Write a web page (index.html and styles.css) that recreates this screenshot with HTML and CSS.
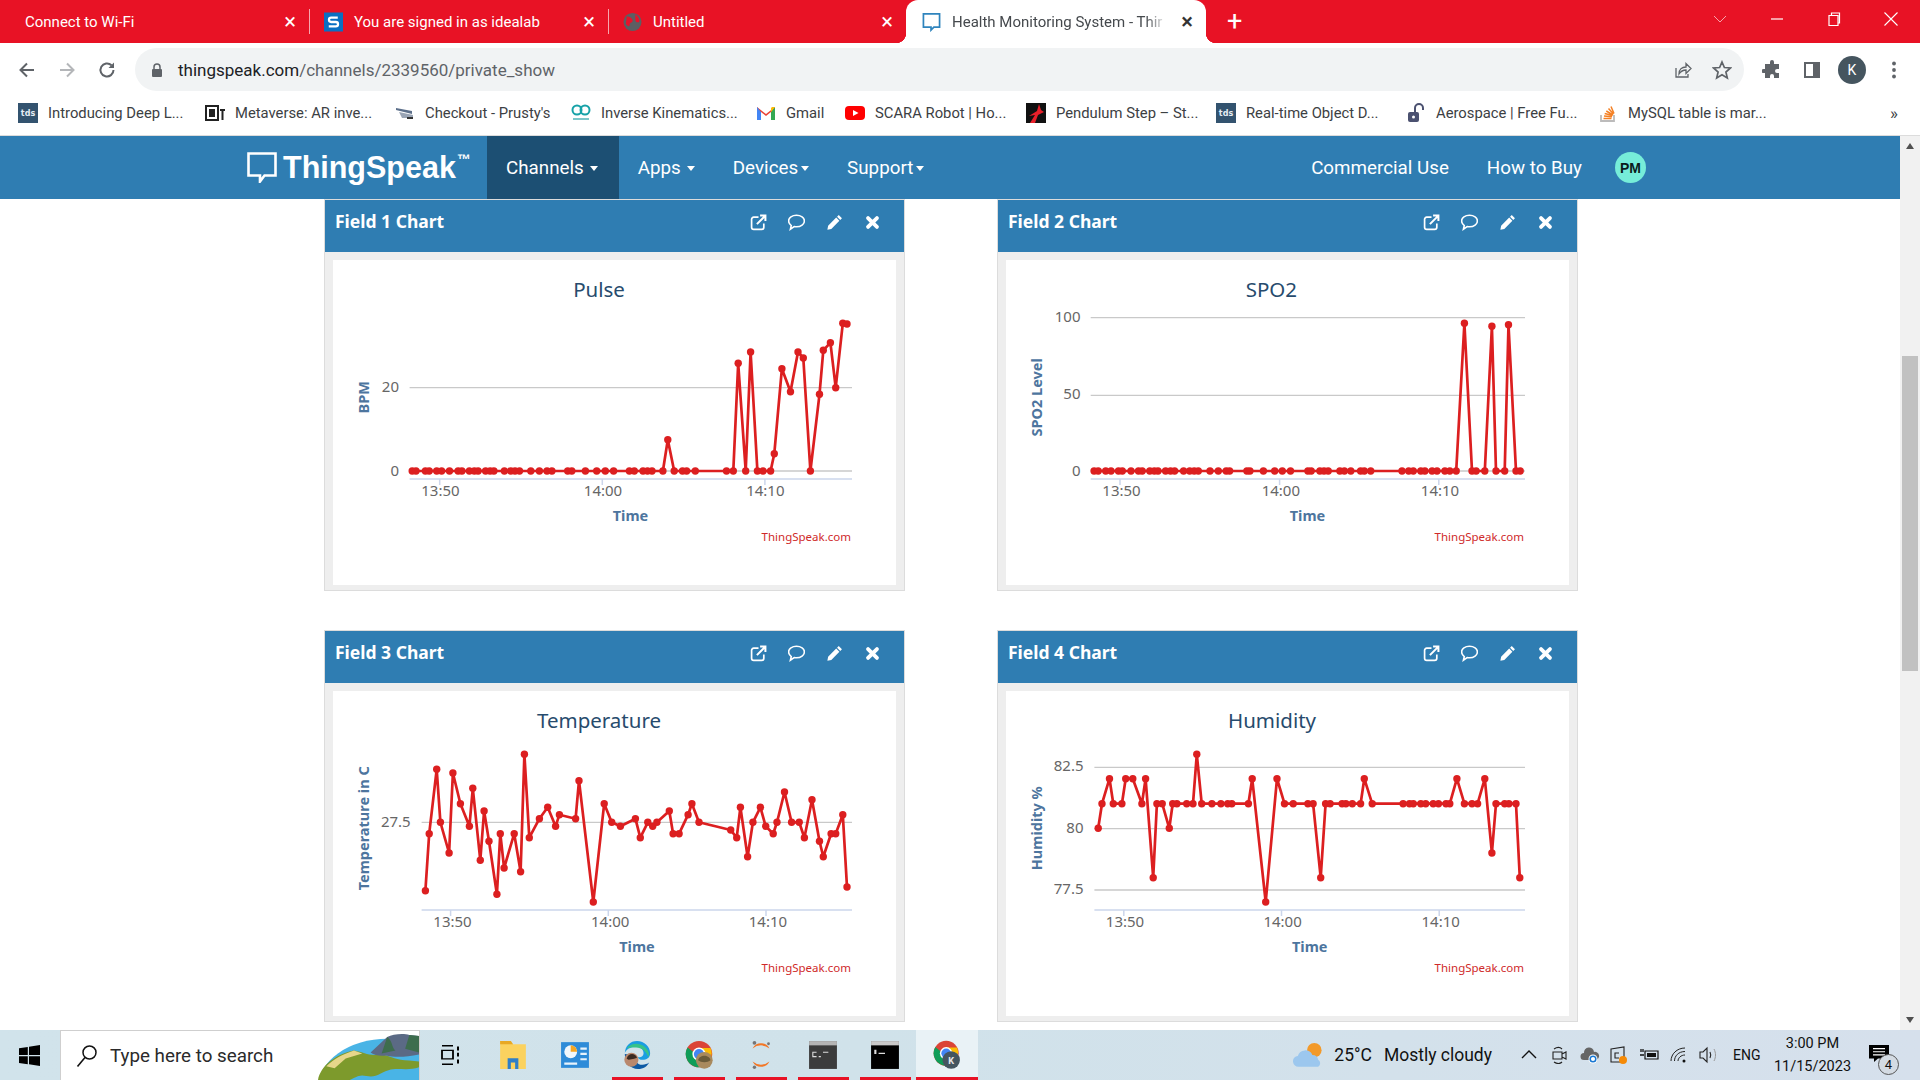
FILE: index.html
```html
<!DOCTYPE html>
<html lang="en">
<head>
<meta charset="utf-8">
<title>Health Monitoring System - ThingSpeak</title>
<link rel="stylesheet" href="styles.css">
</head>
<body>
<svg class="defs" aria-hidden="true">
  <defs>
    <symbol id="i-ext" viewBox="0 0 16 16"><path d="M13 9v3.500a2 2 0 0 1-2 2H3.500a2 2 0 0 1-2-2V5a2 2 0 0 1 2-2H8" fill="none" stroke="#fff" stroke-width="1.600"/><path d="M6.500 9.500 14 2M9.500 1.500h5v5" fill="none" stroke="#fff" stroke-width="1.900"/></symbol>
    <symbol id="i-com" viewBox="1 1.500 14 14"><path d="M8 2.500c3.600 0 6.500 2 6.500 4.700S11.600 12 8 12c-.7 0-1.300-.1-1.900-.2L3 14l.7-3C2.400 10 1.500 8.700 1.500 7.200 1.500 4.500 4.400 2.500 8 2.500z" fill="none" stroke="#fff" stroke-width="1.300"/></symbol>
    <symbol id="i-pen" viewBox="0 0 16 16"><path d="M12 1l3 3-1.600 1.600-3-3zM9.600 3.400l3 3L5 14l-3.700.8L2 11z" fill="#fff"/></symbol>
    <symbol id="i-x" viewBox="0 0 16 16"><path d="M3.800 3.800l8.400 8.400M12.200 3.800l-8.400 8.400" fill="none" stroke="#fff" stroke-width="3.600" stroke-linecap="round"/></symbol>
    <symbol id="i-chrome" viewBox="0 0 32 32"><circle cx="16" cy="16" r="15" fill="#db4437"/><path d="M16 16 3 23.500A15 15 0 0 1 3 8.500L10 14z" fill="#0f9d58"/><path d="M3 23.500 10 14l6 2 7 13A15 15 0 0 1 3 23.500z" fill="#0f9d58"/><path d="M16 9h13a15 15 0 0 1-8 20l-5-13z" fill="#fbbc05"/><circle cx="16" cy="16" r="7.500" fill="#fff"/><circle cx="16" cy="16" r="5.800" fill="#4285f4"/></symbol>
  </defs>
</svg>

<header class="tabs">
  <div class="tab"><span class="tab-title">Connect to Wi-Fi</span><span class="tab-x">×</span></div>
  <div class="tab sep">
    <svg class="fav" viewBox="0 0 20 20"><rect width="20" height="20" fill="#0a6fc2"/><path d="M14.500 5.500H7.500a2 2 0 0 0 0 4.500h5a2.200 2.200 0 0 1 0 4.500H5" fill="none" stroke="#fff" stroke-width="2.400"/></svg>
    <span class="tab-title">You are signed in as idealab</span><span class="tab-x">×</span>
  </div>
  <div class="tab sep">
    <svg class="fav" viewBox="0 0 20 20"><circle cx="10" cy="10" r="9.500" fill="#5c5f63"/><path d="M4 4c3 1 5 1 6 4s-3 2-3 5-2 1-4-1zM13 2c3 2 5 5 4 8-2 1-4 0-4-3z" fill="#e8122a"/></svg>
    <span class="tab-title">Untitled</span><span class="tab-x">×</span>
  </div>
  <div class="tab active">
    <svg class="fav" viewBox="0 0 20 20"><path d="M1.500 1.500h17v14h-6l-3 3v-3h-8z" fill="none" stroke="#2f84bd" stroke-width="1.800"/></svg>
    <span class="tab-title fade">Health Monitoring System - Thir</span><span class="tab-x dark">×</span>
  </div>
  <div class="tab-new">+</div>
  <div class="win">
    <svg class="win-ctl" viewBox="0 0 16 16"><path d="M2 5l6 6 6-6" fill="none" stroke="#f6a3ab" stroke-width="1"/></svg>
    <svg class="win-ctl" viewBox="0 0 16 16"><path d="M2 8h12" fill="none" stroke="#fff" stroke-width="1.200"/></svg>
    <svg class="win-ctl" viewBox="0 0 16 16"><path d="M3 4.500h9v10H3zM5.500 4.500V2h8v10H12" fill="none" stroke="#fff" stroke-width="1.200"/></svg>
    <svg class="win-ctl" viewBox="0 0 16 16"><path d="M1.500 1.500l13 13M14.500 1.500l-13 13" fill="none" stroke="#fff" stroke-width="1.100"/></svg>
  </div>
</header>

<div class="toolbar">
  <div class="nav-btns">
    <svg class="tb-icon" viewBox="0 0 20 20"><path d="M17 10H4M10 3.500 3.500 10l6.500 6.500" fill="none" stroke="#5f6368" stroke-width="2"/></svg>
    <svg class="tb-icon" viewBox="0 0 20 20"><path d="M3 10h13M10 3.500l6.500 6.500-6.500 6.500" fill="none" stroke="#b4b6b9" stroke-width="2"/></svg>
    <svg class="tb-icon" viewBox="0 0 20 20"><path d="M16.500 10a6.500 6.500 0 1 1-2-4.700" fill="none" stroke="#5f6368" stroke-width="2"/><path d="M17 2.500v5.500h-5.500z" fill="#5f6368"/></svg>
  </div>
  <div class="omnibox">
    <svg class="lock" viewBox="0 0 12 14"><path d="M3 6V4a3 3 0 0 1 6 0v2" fill="none" stroke="#5f6368" stroke-width="1.500"/><rect x="1" y="6" width="10" height="8" rx="1" fill="#5f6368"/></svg>
    <span class="url"><b>thingspeak.com</b>/channels/2339560/private_show</span>
    <svg class="omni-icon" viewBox="0 0 20 20"><path d="M4 8v9h12v-3" fill="none" stroke="#5f6368" stroke-width="1.300"/><path d="M7 14c0-5 3-7 7-7V3.500l5 5-5 5V10c-3 0-5 1-7 4z" fill="none" stroke="#5f6368" stroke-width="1.300"/></svg>
    <svg class="omni-icon" viewBox="0 0 20 20"><path d="M10 2l2.400 5.500 6 .5-4.500 4 1.400 5.900L10 14.800l-5.300 3.100L6.100 12 1.600 8l6-.5z" fill="none" stroke="#5f6368" stroke-width="1.700"/></svg>
  </div>
  <div class="tb-right">
    <svg class="tb-icon" viewBox="0 0 20 20"><path d="M8 2a2 2 0 0 1 4 0v2h5v5h-2a2 2 0 0 0 0 4h2v5h-5v-2a2 2 0 0 0-4 0v2H3v-5H1.500a2 2 0 0 1 0-4H3V4h5z" fill="#5f6368"/></svg>
    <svg class="tb-icon" viewBox="0 0 20 20"><path d="M3 3h14v14H3z" fill="none" stroke="#5f6368" stroke-width="2"/><path d="M11 3h6v14h-6z" fill="#5f6368"/></svg>
    <span class="avatar">K</span>
    <svg class="tb-icon" viewBox="0 0 20 20"><circle cx="10" cy="3.500" r="1.900" fill="#5f6368"/><circle cx="10" cy="10" r="1.900" fill="#5f6368"/><circle cx="10" cy="16.500" r="1.900" fill="#5f6368"/></svg>
  </div>
</div>

<nav class="bookmarks">
  <a class="bm"><span class="tds">tds</span><span>Introducing Deep L...</span></a>
  <a class="bm"><svg class="bm-ico" viewBox="0 0 20 20"><rect x="1" y="3" width="12" height="14" fill="none" stroke="#222" stroke-width="2"/><rect x="4" y="6" width="6" height="8" fill="#222"/><path d="M15 6h5v2h-1.500v9h-2V8H15z" fill="#222"/></svg><span>Metaverse: AR inve...</span></a>
  <a class="bm"><svg class="bm-ico" viewBox="0 0 20 20"><path d="M1 5l16 3v3L1 7z" fill="#5c6f8a"/><path d="M4 9l14 3v3H7z" fill="#9aa5b5"/><path d="M12 14h6v2h-6z" fill="#333"/></svg><span>Checkout - Prusty's</span></a>
  <a class="bm"><svg class="bm-ico" viewBox="0 0 20 20"><circle cx="6" cy="7" r="4.500" fill="none" stroke="#17a2a8" stroke-width="2"/><circle cx="14" cy="7" r="4.500" fill="none" stroke="#17a2a8" stroke-width="2"/><path d="M2 15h16v2H2z" fill="#7cc6c9"/></svg><span>Inverse Kinematics...</span></a>
  <a class="bm"><svg class="bm-ico" viewBox="0 0 20 20"><path d="M1 4l9 7 9-7v13h-4V9l-5 4-5-4v8H1z" fill="#ea4335"/><path d="M1 17h4V9L1 4z" fill="#4285f4"/><path d="M15 17h4V4l-4 5z" fill="#34a853"/><path d="M15 9l4-5h-3l-1 1z" fill="#fbbc05"/></svg><span>Gmail</span></a>
  <a class="bm"><svg class="bm-ico" viewBox="0 0 20 20"><rect y="3" width="20" height="14" rx="4" fill="#f00"/><path d="M8 7l5.500 3L8 13z" fill="#fff"/></svg><span>SCARA Robot | Ho...</span></a>
  <a class="bm"><svg class="bm-ico" viewBox="0 0 20 20"><rect width="20" height="20" fill="#111"/><path d="M4 20l5-8-6 1 8-5 2-7 2 6 3 2-6 3-3 8z" fill="#e8202a"/></svg><span>Pendulum Step – St...</span></a>
  <a class="bm"><span class="tds">tds</span><span>Real-time Object D...</span></a>
  <a class="bm"><svg class="bm-ico" viewBox="0 0 20 20"><path d="M9 9V5a4 4 0 0 1 8 0v2" fill="none" stroke="#4b5170" stroke-width="2"/><rect x="2" y="9" width="11" height="10" rx="2" fill="#4b5170"/><circle cx="7.500" cy="14" r="1.500" fill="#fff"/></svg><span>Aerospace | Free Fu...</span></a>
  <a class="bm"><svg class="bm-ico" viewBox="0 0 20 20"><path d="M3 12v6h13v-6" fill="none" stroke="#bcbbbb" stroke-width="1.800"/><path d="M5.500 15.500h8M6 13l8 .7M6.700 10.500l7.800 2M8.300 8l6.700 4M10.500 5.500l5 5.500M13 3.500l3 7" stroke="#f48024" stroke-width="1.500" fill="none"/></svg><span>MySQL table is mar...</span></a>
  <span class="bm-more">»</span>
</nav>

<div class="page">
  <main class="main">
    <div class="site-nav">
      <a class="logo">
        <svg class="logo-mark" viewBox="0 0 30 31"><path d="M1.500 1.500h27v22H17.500l-4.500 6v-6H1.500z" fill="none" stroke="#fff" stroke-width="2.600"/></svg>
        <span class="logo-text">ThingSpeak</span><span class="tm">™</span>
      </a>
      <a class="nav-item current">Channels <i class="caret"></i></a>
      <a class="nav-item">Apps <i class="caret"></i></a>
      <a class="nav-item tight">Devices<i class="caret"></i></a>
      <a class="nav-item tight">Support<i class="caret"></i></a>
      <a class="nav-link push">Commercial Use</a>
      <a class="nav-link">How to Buy</a>
      <span class="pm">PM</span>
    </div>

    <section class="grid">
      <article class="panel">
        <div class="panel-head"><h2>Field 1 Chart</h2><div class="panel-tools"><svg><use href="#i-ext"/></svg><svg><use href="#i-com"/></svg><svg><use href="#i-pen"/></svg><svg><use href="#i-x"/></svg></div></div>
        <div class="panel-body">
          <svg class="chart" viewBox="0 0 563 325">
            <defs><marker id="d1" markerUnits="userSpaceOnUse" markerWidth="9" markerHeight="9" refX="4.500" refY="4.500"><circle cx="4.500" cy="4.500" r="3.700" fill="#dc1f20"/></marker></defs>
            <text class="c-title" x="266" y="37" text-anchor="middle">Pulse</text>
            <path class="grid-line" d="M76.600 127.700H519M76.600 211H519"/>
            <path class="axis" d="M76.600 219H519M106.700 219v6M269.300 219v6M431.900 219v6"/>
            <polyline class="series" marker-start="url(#d1)" marker-mid="url(#d1)" marker-end="url(#d1)" points="79.200,211 83,211 92.400,211 96.200,211 103.700,211 108.600,211 116.500,211 125.100,211 128.900,211 136.400,211 141.300,211 145.100,211 152.600,211 157.100,211 160.900,211 171.400,211 177.800,211 182,211 186.500,211 197.800,211 206.400,211 214,211 218.900,211 234.700,211 238.800,211 252.400,211 263.700,211 272.300,211 280.600,211 296.400,211 301.300,211 310,211 314.500,211 319,211 329.900,211 334.800,179.700 341.200,211 349.500,211 353.600,211 362.300,211 393.500,211 400.300,211 405.200,103.300 412.700,211 417.600,92 424.400,211 430,211 437.600,211 441.300,193.700 448.900,108.700 457.500,131.700 465,92 470.300,98 477.400,211 486.500,134.300 490.300,90.300 497.400,82.700 502.700,127.700 509.800,63.300 514,64"/>
            <text class="c-y" x="66" y="132" text-anchor="end">20</text>
            <text class="c-y" x="66" y="216" text-anchor="end">0</text>
            <text class="c-x" x="107.400" y="236" text-anchor="middle">13:50</text>
            <text class="c-x" x="270" y="236" text-anchor="middle">14:00</text>
            <text class="c-x" x="432.300" y="236" text-anchor="middle">14:10</text>
            <text class="c-axis" x="297.500" y="261" text-anchor="middle">Time</text>
            <text class="c-axis" text-anchor="middle" transform="translate(35.500 137.300) rotate(-90)">BPM</text>
            <text class="c-credit" x="518" y="281" text-anchor="end">ThingSpeak.com</text>
          </svg>
        </div>
      </article>

      <article class="panel">
        <div class="panel-head"><h2>Field 2 Chart</h2><div class="panel-tools"><svg><use href="#i-ext"/></svg><svg><use href="#i-com"/></svg><svg><use href="#i-pen"/></svg><svg><use href="#i-x"/></svg></div></div>
        <div class="panel-body">
          <svg class="chart" viewBox="0 0 563 325">
            <defs><marker id="d2" markerUnits="userSpaceOnUse" markerWidth="9" markerHeight="9" refX="4.500" refY="4.500"><circle cx="4.500" cy="4.500" r="3.700" fill="#dc1f20"/></marker></defs>
            <text class="c-title" x="265.400" y="37" text-anchor="middle">SPO2</text>
            <path class="grid-line" d="M84.700 57.700H519M84.700 135.300H519M84.700 211H519"/>
            <path class="axis" d="M84.700 219H519M114 219v6M273.600 219v6M432.800 219v6"/>
            <polyline class="series" marker-start="url(#d2)" marker-mid="url(#d2)" marker-end="url(#d2)" points="88.100,211 92.200,211 99.700,211 105,211 112.500,211 116.300,211 125,211 132.500,211 136.200,211 143.800,211 148.300,211 152,211 159.600,211 164.500,211 168.600,211 177.600,211 183.700,211 188.200,211 192.300,211 204,211 212.300,211 220.200,211 223.600,211 240.900,211 243.900,211 257.400,211 268.700,211 276.300,211 284.500,211 301.900,211 305.200,211 313.900,211 318,211 322.200,211 333.900,211 338.400,211 344.800,211 354.600,211 358.300,211 364.700,211 396,211 402.700,211 407.300,211 414.800,211 418.900,211 426.100,211 431,211 438.900,211 443.800,211 450.200,211 458.400,63.300 466,211 470.100,211 478.800,211 485.900,66.300 490,211 498.700,211 502.500,64.700 510,211 514.200,211"/>
            <text class="c-y" x="74.500" y="62" text-anchor="end">100</text>
            <text class="c-y" x="74.500" y="139" text-anchor="end">50</text>
            <text class="c-y" x="74.500" y="216" text-anchor="end">0</text>
            <text class="c-x" x="115.500" y="236" text-anchor="middle">13:50</text>
            <text class="c-x" x="274.800" y="236" text-anchor="middle">14:00</text>
            <text class="c-x" x="434" y="236" text-anchor="middle">14:10</text>
            <text class="c-axis" x="301.500" y="261" text-anchor="middle">Time</text>
            <text class="c-axis" text-anchor="middle" transform="translate(35.500 137.300) rotate(-90)">SPO2 Level</text>
            <text class="c-credit" x="518" y="281" text-anchor="end">ThingSpeak.com</text>
          </svg>
        </div>
      </article>

      <article class="panel">
        <div class="panel-head"><h2>Field 3 Chart</h2><div class="panel-tools"><svg><use href="#i-ext"/></svg><svg><use href="#i-com"/></svg><svg><use href="#i-pen"/></svg><svg><use href="#i-x"/></svg></div></div>
        <div class="panel-body">
          <svg class="chart" viewBox="0 0 563 325">
            <defs><marker id="d3" markerUnits="userSpaceOnUse" markerWidth="9" markerHeight="9" refX="4.500" refY="4.500"><circle cx="4.500" cy="4.500" r="3.700" fill="#dc1f20"/></marker></defs>
            <text class="c-title" x="266" y="37" text-anchor="middle">Temperature</text>
            <path class="grid-line" d="M88.600 131.300H519"/>
            <path class="axis" d="M88.600 219H519M117.600 219v6M275.300 219v6M433 219v6"/>
            <polyline class="series" marker-start="url(#d3)" marker-mid="url(#d3)" marker-end="url(#d3)" points="92.400,199.700 96.200,142.700 103.700,78.300 107.400,131.300 116.100,162 119.900,82 127.400,112.700 136.400,135.300 139.800,97.300 147.300,169.300 151.100,120 156,150.300 163.900,203.300 167.300,142.700 171.100,177 181.200,142.700 187.600,180.700 191.400,63.300 196.300,146.700 206.400,127.700 214.700,116.300 222.600,135.300 226.400,123.700 242.600,127.700 246,89.700 260.300,211 271.200,112.700 278.700,131.300 287.400,135.300 302.400,127.700 307.300,146.700 314.800,131.300 319.700,135.300 323.900,131.300 336.300,120 340.100,142.700 346.100,142.700 355.100,123.700 358.900,112.700 366,131.300 397.700,139 403.700,146.700 407.400,116.300 414.600,165.700 419.900,131.300 427.400,116.300 432.700,135.300 440.200,142.700 444,131.300 451.500,101 458.600,131.300 466.200,131.300 471.400,146.700 479,108.700 486.500,150.300 490.300,165.700 498.100,142.700 502.700,142.700 509.800,123.700 514,196"/>
            <text class="c-y" x="77.700" y="136" text-anchor="end">27.5</text>
            <text class="c-x" x="119.500" y="236" text-anchor="middle">13:50</text>
            <text class="c-x" x="277.200" y="236" text-anchor="middle">14:00</text>
            <text class="c-x" x="434.900" y="236" text-anchor="middle">14:10</text>
            <text class="c-axis" x="304" y="261" text-anchor="middle">Time</text>
            <text class="c-axis" text-anchor="middle" transform="translate(35.500 137.300) rotate(-90)">Temperature in C</text>
            <text class="c-credit" x="518" y="281" text-anchor="end">ThingSpeak.com</text>
          </svg>
        </div>
      </article>

      <article class="panel">
        <div class="panel-head"><h2>Field 4 Chart</h2><div class="panel-tools"><svg><use href="#i-ext"/></svg><svg><use href="#i-com"/></svg><svg><use href="#i-pen"/></svg><svg><use href="#i-x"/></svg></div></div>
        <div class="panel-body">
          <svg class="chart" viewBox="0 0 563 325">
            <defs><marker id="d4" markerUnits="userSpaceOnUse" markerWidth="9" markerHeight="9" refX="4.500" refY="4.500"><circle cx="4.500" cy="4.500" r="3.700" fill="#dc1f20"/></marker></defs>
            <text class="c-title" x="266" y="37" text-anchor="middle">Humidity</text>
            <path class="grid-line" d="M88.400 76.300H519M88.400 137.700H519M88.400 199H519"/>
            <path class="axis" d="M88.400 219H519M117.800 219v6M275.500 219v6M433.200 219v6"/>
            <polyline class="series" marker-start="url(#d4)" marker-mid="url(#d4)" marker-end="url(#d4)" points="92.200,137.300 96,112.700 103.500,87.700 107.300,112.700 115.900,112.700 119.700,87.700 126.800,87.700 135.900,112.700 139.600,87.700 147.200,186.700 150.900,112.700 156.200,112.700 163.300,137.300 166.700,112.700 170.900,112.700 180.700,112.700 187,112.700 190.800,63.300 195.700,112.700 205.900,112.700 214.900,112.700 221.700,112.700 225.800,112.700 242.400,112.700 246.200,87.700 259.700,211 271,87.700 278.500,112.700 287.200,112.700 301.900,112.700 307.100,112.700 314.700,186.700 319.600,112.700 324.100,112.700 336.100,112.700 339.900,112.700 346.300,112.700 354.600,112.700 358.300,87.700 366.200,112.700 397.100,112.700 403.500,112.700 407.300,112.700 414.800,112.700 419.700,112.700 427.200,112.700 432.500,112.700 440,112.700 443.800,112.700 450.900,87.700 458.400,112.700 466,112.700 471.600,112.700 478.800,87.700 485.900,162 490,112.700 498.700,112.700 502.900,112.700 510,112.700 513.800,186.700"/>
            <text class="c-y" x="77.500" y="80" text-anchor="end">82.5</text>
            <text class="c-y" x="77.500" y="142" text-anchor="end">80</text>
            <text class="c-y" x="77.500" y="203" text-anchor="end">77.5</text>
            <text class="c-x" x="119" y="236" text-anchor="middle">13:50</text>
            <text class="c-x" x="276.600" y="236" text-anchor="middle">14:00</text>
            <text class="c-x" x="434.700" y="236" text-anchor="middle">14:10</text>
            <text class="c-axis" x="303.700" y="261" text-anchor="middle">Time</text>
            <text class="c-axis" text-anchor="middle" transform="translate(35.500 137.300) rotate(-90)">Humidity %</text>
            <text class="c-credit" x="518" y="281" text-anchor="end">ThingSpeak.com</text>
          </svg>
        </div>
      </article>
    </section>
  </main>
  <aside class="scrollbar">
    <span class="arrow-up"></span>
    <span class="thumb"></span>
    <span class="arrow-down"></span>
  </aside>
</div>

<footer class="taskbar">
  <div class="start"><svg viewBox="0 0 21 21"><path d="M0 3.200 8.800 2v8H0zM10 1.800 21 0v10H10zM0 11.200h8.800v8L0 18zM10 11.200h11V21l-11-1.700z" fill="#000"/></svg></div>
  <div class="search">
    <svg class="mag" viewBox="0 0 22 24"><circle cx="13.500" cy="8.500" r="6.500" fill="none" stroke="#111" stroke-width="1.500"/><path d="M9 13.500 1.500 22.500" stroke="#111" stroke-width="1.600"/></svg>
    <span class="search-text">Type here to search</span>
    <svg class="earth" viewBox="28 0 73 50" preserveAspectRatio="none">
      <circle cx="78" cy="58" r="50" fill="#49b4e6"/>
      <path d="M28 50c2-14 12-26 26-30 8 2 10 6 20 4 8 2 10 6 20 6l7 1v6c-8 4-16 0-22 3-6 2-8 8-16 6-6-2-8 2-12 4z" fill="#7d9a2c"/>
      <path d="M34 36c6-8 12-12 20-16l6 3-12 5-8 10z" fill="#e6d68a"/>
      <path d="M66 22 78 6c4-3 12-4 16-2l7 1v19c-10 3-18 3-24 1-4 1-8 0-11-3z" fill="#5b6a85"/>
      <path d="M78 6c4 4 3 10 6 14l-10 3zM94 4l-3 14 10 4V5z" fill="#3e6d4d"/>
    </svg>
  </div>
  <div class="apps">
    <div class="app tv"><svg viewBox="0 0 20 26" preserveAspectRatio="none"><path d="M1 1h11M1 25h11M1 7h11v11H1z" fill="none" stroke="#000" stroke-width="1.800"/><path d="M17 2v5M17 10v5M17 19v5" stroke="#000" stroke-width="2"/></svg></div>
    <div class="app"><svg viewBox="0 0 26 28"><path d="M1 1h10l2 3h12v23H1z" fill="#fbd25f"/><path d="M1 1h10l2 3H1z" fill="#e8a824"/><path d="M8 27V17h10v10h-3v-6h-4v6z" fill="#2f7fc8"/></svg></div>
    <div class="app"><svg viewBox="0 0 28 28"><rect x="1" y="2" width="26" height="24" fill="#2e8bd8"/><circle cx="10" cy="11" r="6" fill="#f1f7fc"/><path d="M10 5a6 6 0 0 1 6 6h-6z" fill="#f5a623"/><path d="M19 7h6v2h-6zM19 12h6v2h-6zM19 17h6v2h-6zM4 21h12v2H4z" fill="#e7f3fc"/></svg></div>
    <div class="app run"><svg viewBox="0 0 30 32"><path d="M2 15C2 6 8 1 15 1c8 0 14 6 14 13 0 5-4 7-8 7-3 0-5-1-5-3 2 1 6 0 6-4 0-4-4-7-8-7-6 0-12 4-12 8z" fill="#1b9de2"/><path d="M2 15c0 9 6 16 14 16 6 0 10-3 12-7-4 3-12 4-14-2C12 18 8 15 2 15z" fill="#0c59a4"/><path d="M4 9c4-6 14-7 20-1 3 3 5 7 3 10-2-6-7-10-13-10-4 0-7 0-10 1z" fill="#36c28a"/><circle cx="9" cy="21" r="7.500" fill="#b9886d"/><path d="M4 20c1-6 9-7 11-1l-3 1-6 1z" fill="#3a2a22"/></svg></div>
    <div class="app run"><svg viewBox="0 0 32 34"><use href="#i-chrome" width="32" height="32"/><circle cx="22" cy="23" r="9.500" fill="#a98a5e"/><path d="M15 23c1-7 13-7 14 0-3 3-11 3-14 0z" fill="#6a5b3a"/></svg></div>
    <div class="app run"><svg viewBox="0 0 26 32"><path d="M4 9a10 10 0 0 1 18 0 14 14 0 0 0-18 0zM4 23a10 10 0 0 0 18 0 14 14 0 0 1-18 0z" fill="#f37726"/><circle cx="6" cy="3" r="2" fill="#767677"/><circle cx="21" cy="4" r="1.500" fill="#767677"/><circle cx="6" cy="29" r="1.800" fill="#767677"/></svg></div>
    <div class="app run"><svg viewBox="0 0 28 28"><rect x="1" y="1" width="26" height="26" fill="#3c3c3c"/><path d="M1 1h26v4H1z" fill="#b5b5b5"/><path d="M4 11h4v1H5v3h3v1H4zM10 15h2v1h-2zM14 11h5v1h-5z" fill="#ddd"/></svg></div>
    <div class="app run"><svg viewBox="0 0 28 28"><rect x="1" y="1" width="26" height="26" fill="#000"/><path d="M1 1h26v4H1z" fill="#c9c9c9"/><path d="M4 9h2v4H4zM8 12h6v1H8z" fill="#ddd"/></svg></div>
    <div class="app run active"><svg viewBox="0 0 34 36"><use href="#i-chrome" width="32" height="32"/><circle cx="22" cy="24" r="10.500" fill="#45555f"/><text class="k-badge" x="22" y="28.500" text-anchor="middle">K</text></svg></div>
  </div>
  <div class="tray">
    <svg class="weather" viewBox="0 0 32 26"><circle cx="22" cy="8" r="7.500" fill="#f39a2a"/><path d="M6 25a5.500 5.500 0 0 1-1-11 8 8 0 0 1 15-1 6 6 0 0 1 6 5 4 4 0 0 1 0 7z" fill="#9cc7ee"/></svg>
    <span class="temp">25°C</span><span class="cond">Mostly cloudy</span>
    <div class="tray-icons">
      <svg viewBox="0 0 18 18"><path d="M2 12l7-7 7 7" fill="none" stroke="#111" stroke-width="1.400"/></svg>
      <svg viewBox="0 0 18 18"><path d="M3 6h9v7H3zM12 8l4-2v7l-4-2zM4 3c3-2 6-2 8 0M4 16c3 2 6 2 8 0" fill="none" stroke="#222" stroke-width="1.100"/></svg>
      <svg viewBox="0 0 18 18"><path d="M4 14a3.500 3.500 0 0 1 0-7 5 5 0 0 1 10-1 4 4 0 0 1 2 8z" fill="#666"/><circle cx="13" cy="13" r="4.500" fill="#fff"/><circle cx="13" cy="13" r="2.800" fill="none" stroke="#1877d2" stroke-width="1.500"/></svg>
      <svg viewBox="0 0 18 18"><path d="M1 3l13-2v15H1z" fill="none" stroke="#222" stroke-width="1.100"/><path d="M9 7H5v5h4" fill="none" stroke="#222" stroke-width="1.100"/><circle cx="13" cy="14" r="4" fill="#f58a07"/></svg>
      <svg viewBox="0 0 20 18"><path d="M6 5h13v8H6z" fill="none" stroke="#111" stroke-width="1.200"/><path d="M8 7h9v4H8z" fill="#111"/><path d="M1 9h4M2 3v3M4 3v3" stroke="#111" stroke-width="1.300"/></svg>
      <svg viewBox="0 0 18 18"><path d="M1 15C1 8 7 2 15 2M4.500 15c0-5 4-9.500 10.500-9.500M8 15c0-3 3-6 7-6" fill="none" stroke="#222" stroke-width="1"/><circle cx="14" cy="15" r="1.500" fill="#111"/></svg>
      <svg viewBox="0 0 20 18"><path d="M1 6h3l4-4v14l-4-4H1z" fill="none" stroke="#222" stroke-width="1.100"/><path d="M11 6c1 2 1 4 0 6" fill="none" stroke="#222" stroke-width="1.100"/><path d="M15 3c2 4 2 8 0 12" fill="none" stroke="#999" stroke-width="1"/></svg>
    </div>
    <span class="lang">ENG</span>
    <div class="clock"><span>3:00 PM</span><span>11/15/2023</span></div>
    <div class="notify">
      <svg viewBox="0 0 20 20" preserveAspectRatio="none"><path d="M0 0h20v15H9l-4 4v-4H0z" fill="#000"/><path d="M4 4h12M4 7.500h12M4 11h12" stroke="#fff" stroke-width="1.200"/></svg>
      <span class="badge">4</span>
    </div>
  </div>
</footer>
</body>
</html>
```
FILE: styles.css
```css
* { box-sizing: border-box; }
html, body { margin: 0; height: 100%; }
body {
  width: 1920px; height: 1080px; overflow: hidden;
  display: flex; flex-direction: column;
  font-family: Roboto, "Liberation Sans", sans-serif;
  background: #fff; color: #222;
}
a { color: inherit; text-decoration: none; }
.defs { width: 0; height: 0; flex: none; display: block; overflow: hidden; }

/* browser tab strip */
.tabs {
  flex: none; height: 43px; background: #e81225;
  display: grid; grid-template-columns: 309px 299px 298px 300px 1fr 240px;
  align-items: stretch; color: #fff; font-size: 15px;
}
.tab { display: flex; align-items: center; padding: 0 13px 0 25px; position: relative; min-width: 0; }
.tab.sep { padding-left: 15px; }
.tab.sep::before { content: ""; position: absolute; left: 0; top: 9px; bottom: 9px; width: 1px; background: #f7a6ad; }
.fav { width: 19px; height: 20px; flex: none; margin-right: 11px; }
.tab-title { flex: 1; min-width: 0; white-space: nowrap; margin-right: 8px; }
.tab-x { flex: none; font-size: 22px; line-height: 1; font-weight: 400; }
.tab.active {
  background: #fff; color: #45494d; border-radius: 12px 12px 0 0; padding: 0 13px 0 16px;
}
.tab.active .tab-title { margin-right: 14px; }
.tab.active::before, .tab.active::after {
  content: ""; position: absolute; bottom: 0; width: 10px; height: 10px;
}
.tab.active::before { left: -10px; background: radial-gradient(circle at 0 0, transparent 10px, #fff 10.500px); }
.tab.active::after { right: -10px; background: radial-gradient(circle at 100% 0, transparent 10px, #fff 10.500px); }
.fade { -webkit-mask-image: linear-gradient(to right, #000 90%, transparent 100%); mask-image: linear-gradient(to right, #000 90%, transparent 100%); }
.tab-x.dark { color: #333; font-weight: 500; }
.tab-new { font-size: 27px; line-height: 43px; font-weight: 400; padding-left: 21px; }
.win { display: flex; align-items: center; justify-content: flex-end; gap: 41px; padding: 0 21px 5px 0; }
.win-ctl { width: 16px; height: 16px; }

/* toolbar */
.toolbar { flex: none; height: 48px; display: flex; align-items: flex-start; padding-top: 5px; }
.nav-btns { width: 135px; height: 43px; display: flex; align-items: center; padding-left: 17px; gap: 20px; }
.tb-icon { width: 20px; height: 20px; flex: none; }
.omnibox {
  width: 1609px; height: 43px; border-radius: 22px; background: #f1f3f4;
  display: flex; align-items: center; padding: 0 12px 0 16px;
}
.lock { width: 12px; height: 14px; margin-right: 15px; flex: none; }
.url { flex: 1; font-size: 17px; color: #5f6368; }
.url b { font-weight: 400; color: #202124; }
.omni-icon { width: 20px; height: 20px; margin-left: 20px; flex: none; }
.tb-right { flex: 1; height: 43px; display: flex; align-items: center; padding-left: 18px; gap: 20px; }
.avatar {
  width: 28px; height: 28px; border-radius: 50%; background: #45555f; color: #fff;
  font-size: 14px; display: flex; align-items: center; justify-content: center; margin: 0 -2px 0 -4px; flex: none;
}

/* bookmarks */
.bookmarks {
  flex: none; height: 45px; border-bottom: 1px solid #dcdcdc; padding-left: 18px;
  display: grid; grid-template-columns: 187px 190px 176px 185px 89px 181px 190px 190px 192px 1fr 50px;
  align-items: center; font-size: 14.800px; color: #3c4043;
}
.bm { display: flex; align-items: center; gap: 10px; white-space: nowrap; }
.bm-ico { width: 20px; height: 20px; flex: none; }
.tds {
  width: 20px; height: 20px; flex: none; background: #33536f; color: #e6edf3;
  font: bold 8px "DejaVu Sans", sans-serif; display: flex; align-items: center; justify-content: center;
}
.bm-more { text-align: right; padding-right: 22px; font-size: 17px; }

/* page */
.page { flex: 1; min-height: 0; display: flex; }
.main { flex: 1; min-width: 0; overflow: hidden; display: flex; flex-direction: column; }
.site-nav {
  flex: none; height: 63px; background: #2f7db2; color: #fff;
  display: flex; align-items: stretch; padding-left: 247px; font-size: 18.800px;
}
.logo { display: flex; align-items: center; width: 240px; }
.logo-mark { width: 30px; height: 31px; flex: none; margin: 0 6px 0 0; }
.logo-text { font: bold 30.500px "Liberation Sans", sans-serif; }
.tm { font-size: 14px; font-weight: 700; align-self: flex-start; margin: 15px 0 0 1px; font-family: "Liberation Sans", sans-serif; }
.nav-item { display: flex; align-items: center; gap: 6px; padding: 0 19px; white-space: nowrap; }
.nav-item.tight { gap: 3px; }
.nav-item.current { background: #1c4f73; padding-right: 21px; }
.caret { width: 0; height: 0; border: 4.500px solid transparent; border-top: 5px solid #fff; border-bottom: 0; display: block; margin-top: 1px; }
.nav-link { display: flex; align-items: center; padding: 0 19px; white-space: nowrap; }
.nav-link.push { margin-left: auto; }
.pm {
  width: 31px; height: 31px; border-radius: 50%; background: #76edd9; color: #0b1c1c;
  font: bold 14px "Liberation Sans", sans-serif; display: flex; align-items: center; justify-content: center;
  align-self: center; margin: 0 254px 0 14px; flex: none;
}

.grid { display: grid; grid-template-columns: 581px 581px; gap: 39px 92px; padding-left: 324px; }
.panel { height: 392px; border: 1px solid #dcdcdc; background: #eee; }
.panel-head { height: 52px; background: #2f7db2; color: #fff; display: flex; align-items: flex-start; padding: 11px 23px 0 10px; }
.panel-head h2 { margin: 0; flex: 1; font: bold 17.500px/21px "Noto Sans", sans-serif; }
.panel-tools { display: flex; gap: 21px; padding-top: 3px; }
.panel-tools svg { width: 17px; height: 17px; display: block; }
.panel-body { padding: 8px 8px 5px; }
.chart { display: block; width: 563px; height: 325px; background: #fff; }
.c-title { font: 20.500px "Noto Sans", sans-serif; fill: #274b6d; }
.c-y, .c-x { font: 15px "Noto Sans", sans-serif; fill: #666; }
.c-axis { font: bold 14.500px "Noto Sans", sans-serif; fill: #4d759e; }
.c-credit { font: 11.500px "Noto Sans", sans-serif; fill: #cf2a2a; }
.grid-line { fill: none; stroke: #c9c9c9; stroke-width: 1.300; }
.axis { fill: none; stroke: #ccd6eb; stroke-width: 1.500; }
.series { fill: none; stroke: #dc1f20; stroke-width: 2.700; stroke-linejoin: round; }

/* scrollbar */
.scrollbar { flex: none; width: 20px; background: #f1f1f1; display: flex; flex-direction: column; align-items: center; }
.arrow-up, .arrow-down { width: 0; height: 0; border: 4.500px solid transparent; display: block; flex: none; }
.arrow-up { border-bottom: 6px solid #505050; border-top: 0; margin-top: 7px; }
.arrow-down { border-top: 6px solid #505050; border-bottom: 0; margin-top: auto; margin-bottom: 7px; }
.thumb { width: 16px; height: 315px; background: #c1c1c1; margin-top: 207px; flex: none; }

/* taskbar */
.taskbar {
  flex: none; height: 50px; display: flex; align-items: stretch;
  background: linear-gradient(to right, #d1e3eb, #d0e2ea 45%, #d6e0ec);
}
.start { width: 60px; display: flex; align-items: center; padding-left: 19px; }
.start svg { width: 21px; height: 21px; }
.search {
  width: 360px; background: #fff; border: 1px solid #cfcfcf; border-bottom: 0; display: flex; align-items: center;
  padding-left: 15px; overflow: hidden;
}
.mag { width: 22px; height: 24px; flex: none; margin-right: 12px; }
.search-text { flex: 1; font-size: 18.800px; color: #2a2a2a; white-space: nowrap; }
.earth { width: 101px; height: 49px; flex: none; }
.apps { display: flex; }
.app { width: 51px; margin: 0 5.500px; display: flex; align-items: center; justify-content: center; border-bottom: 3px solid transparent; padding-top: 3px; }
.app svg { width: 30px; height: 30px; }
.app.tv svg { width: 20px; height: 20px; }
.app.run { border-bottom-color: #e81225; }
.app.active { width: 62px; margin: 0; background: #e9f2f6; }
.k-badge { font: bold 11px Roboto, sans-serif; fill: #e8e8e8; }
.tray { margin-left: auto; display: flex; align-items: center; font-size: 17.500px; color: #111; }
.weather { width: 31px; height: 26px; margin-right: 10px; }
.temp { margin-right: 12px; }
.cond { margin-right: 22px; }
.tray-icons { display: flex; }
.tray-icons svg { width: 30px; height: 18px; display: block; }
.lang { font-size: 14px; margin-left: 9px; width: 24px; white-space: nowrap; }
.clock { width: 111px; display: flex; flex-direction: column; align-items: center; font-size: 14.500px; line-height: 23px; }
.notify { width: 51px; height: 100%; padding: 15px 0 0 0; position: relative; margin-left: 1px; }
.notify svg { width: 20px; height: 18px; display: block; }
.badge {
  position: absolute; left: 9px; top: 24px; width: 21px; height: 21px; border-radius: 50%;
  background: #d4dbe3; border: 1px solid #555; font-size: 13px; display: flex; align-items: center; justify-content: center;
}
```
